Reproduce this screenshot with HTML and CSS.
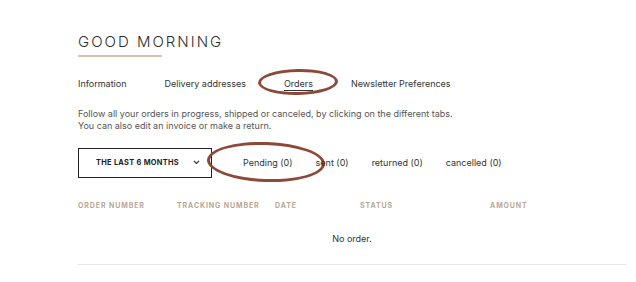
FILE: index.html
```html
<!DOCTYPE html>
<html lang="en">
<head>
  <meta charset="UTF-8" />
  <meta name="viewport" content="width=device-width, initial-scale=1.0" />
  <title>My account - Orders</title>
  <link rel="stylesheet" href="styles.css">
</head>
<body>
  <div class="account">
    <h1 class="greeting">Good morning</h1>

    <nav class="account-tabs">
      <a class="account-tab">Information</a>
      <a class="account-tab">Delivery addresses</a>
      <a class="account-tab active">Orders<span class="mark mark-orders"></span></a>
      <a class="account-tab">Newsletter Preferences</a>
    </nav>

    <p class="intro">
      Follow all your orders in progress, shipped or canceled, by clicking on the different tabs.<br>
      You can also edit an invoice or make a return.
    </p>

    <div class="filters">
      <button class="period-select">
        The last 6 months
        <svg class="chevron" width="7" height="5" viewBox="0 0 7 5"><path d="M1 1l2.5 2.5L6 1" fill="none" stroke="#333" stroke-width="1.1"/></svg>
      </button>
      <div class="status-tabs">
        <span class="status-tab">Pending (0)<span class="mark mark-pending"></span></span>
        <span class="status-tab">sent (0)</span>
        <span class="status-tab">returned (0)</span>
        <span class="status-tab">cancelled (0)</span>
      </div>
    </div>

    <div class="orders-head">
      <span>Order number</span>
      <span>Tracking number</span>
      <span>Date</span>
      <span>Status</span>
      <span>Amount</span>
    </div>

    <div class="orders-empty">No order.</div>
  </div>
</body>
</html>
```

FILE: styles.css
```css
:root {
  --text: #333333;
  --text-soft: #555555;
  --tan: #b9a792;
  --tan-light: #d2c3b2;
  --mark: #8c4838;
}

* {
  box-sizing: border-box;
}

body {
  margin: 0;
  background: #ffffff;
  color: var(--text);
  font-family: Inter, 'Open Sans', Arial, sans-serif;
}

.account {
  width: 548px;
  margin-left: 78px;
  padding-top: 33px;
}

.greeting {
  margin: 0;
  font-size: 15px;
  font-weight: 300;
  letter-spacing: 2px;
  text-transform: uppercase;
  line-height: 18px;
  color: #2e2e2e;
}

.greeting::after {
  content: '';
  display: block;
  width: 84px;
  height: 1.5px;
  margin-top: 4px;
  background: var(--tan-light);
}

.account-tabs {
  display: flex;
  gap: 38px;
  margin-top: 21px;
  font-size: 9px;
  line-height: 12px;
}

.account-tab {
  position: relative;
  color: var(--text);
  cursor: pointer;
}

.account-tab.active {
  text-decoration: underline;
  text-underline-offset: 3px;
}

.mark {
  position: absolute;
  border: 3px solid var(--mark);
  border-radius: 50%;
  pointer-events: none;
}

.mark-orders {
  left: -26px;
  top: -9px;
  width: 80px;
  height: 26px;
  transform: rotate(-1deg);
}

.mark-pending {
  left: -36px;
  top: -15px;
  width: 118px;
  height: 40px;
  transform: rotate(2deg);
}

.intro {
  margin: 18px 0 0;
  font-size: 9px;
  line-height: 12px;
  color: var(--text-soft);
}

.filters {
  display: flex;
  align-items: center;
  margin-top: 16px;
}

.period-select {
  display: flex;
  align-items: center;
  justify-content: space-between;
  width: 134px;
  height: 30px;
  padding: 0 11px 0 17px;
  border: 1.5px solid #222;
  background: #fff;
  font-family: inherit;
  font-size: 7.4px;
  font-weight: 700;
  letter-spacing: 0.3px;
  text-transform: uppercase;
  color: #222;
}

.status-tabs {
  display: flex;
  gap: 23px;
  margin-left: 31px;
  font-size: 9px;
}

.status-tab {
  position: relative;
  color: var(--text);
}

.orders-head {
  display: grid;
  grid-template-columns: 99px 98px 85px 130px 1fr;
  margin-top: 23px;
  font-size: 7px;
  font-weight: 700;
  letter-spacing: 0.9px;
  text-transform: uppercase;
  color: var(--tan);
  line-height: 10px;
}

.orders-empty {
  margin-top: 22px;
  padding-bottom: 19px;
  text-align: center;
  font-size: 9px;
  line-height: 12px;
  color: var(--text);
  border-bottom: 1px solid #e6e6e6;
  box-shadow: 0 1px 1px rgba(0, 0, 0, 0.04);
}
```
